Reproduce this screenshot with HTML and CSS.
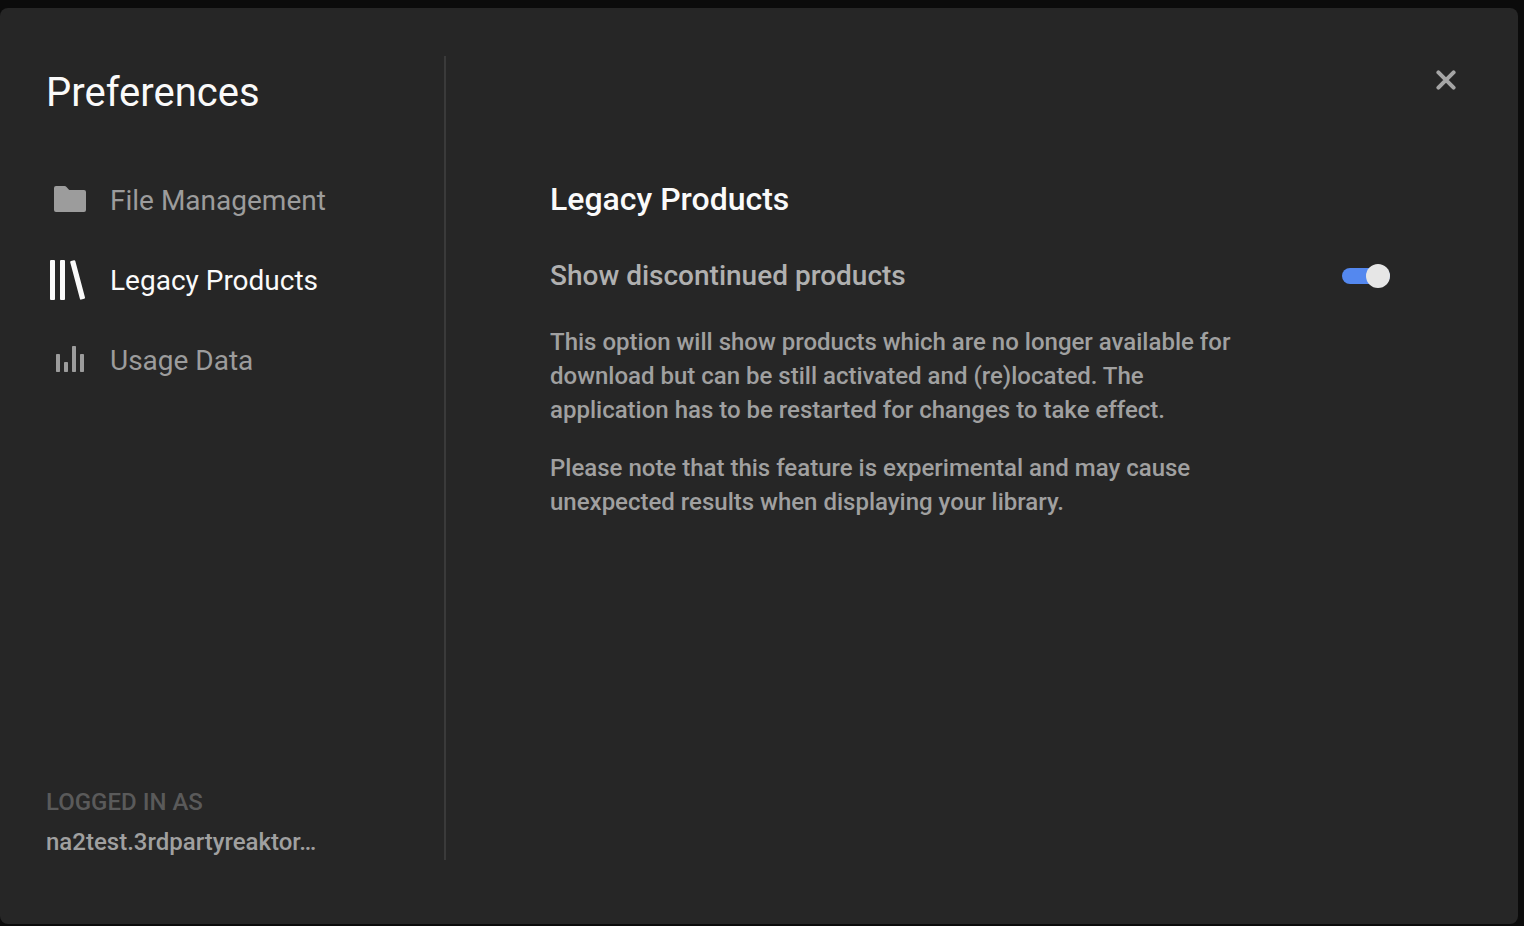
FILE: index.html
```html
<!DOCTYPE html>
<html lang="en">
<head>
<meta charset="utf-8">
<title>Preferences</title>
<link rel="stylesheet" href="styles.css">
</head>
<body>
<main class="dialog">
  <aside class="sidebar">
    <h1 class="title">Preferences</h1>
    <nav class="nav">
      <a class="nav-item" href="#files">
        <svg class="icon" viewBox="0 0 40 40" aria-hidden="true"><path fill="currentColor" d="M8 6h8.500q1.200 0 2 .9l2 2.300q.9.900 2 .9H36a2 2 0 0 1 2 2v18a2 2 0 0 1-2 2H8a2 2 0 0 1-2-2V8a2 2 0 0 1 2-2z"/></svg>
        <span>File Management</span>
      </a>
      <a class="nav-item active" href="#legacy" aria-current="page">
        <svg class="icon" viewBox="0 0 40 40" aria-hidden="true"><g fill="currentColor"><rect x="2" width="5" height="40" rx="1"/><rect x="12" width="5" height="40" rx="1"/><path d="M23 1l3-.8q1-.2 1.300.8l9.700 36.500q.2 1-.8 1.300l-3 .8q-1 .2-1.300-.8L22.200 2.200q-.2-1 .8-1.200z"/></g></svg>
        <span>Legacy Products</span>
      </a>
      <a class="nav-item" href="#usage">
        <svg class="icon" viewBox="0 0 40 40" aria-hidden="true"><g fill="currentColor"><rect x="8" y="14" width="4" height="18" rx=".7"/><rect x="16" y="22" width="4" height="10" rx=".7"/><rect x="24" y="6" width="4" height="26" rx=".7"/><rect x="32" y="14" width="4" height="18" rx=".7"/></g></svg>
        <span>Usage Data</span>
      </a>
    </nav>
    <div class="account">
      <div class="account-label">LOGGED IN AS</div>
      <div class="account-name">na2test.3rdpartyreaktor…</div>
    </div>
  </aside>
  <section class="content">
    <button class="close" type="button" aria-label="Close"><svg class="close-icon" viewBox="0 0 20 20" aria-hidden="true"><path fill="none" stroke="currentColor" stroke-width="4" stroke-linecap="round" d="M2.400 2.400l15.200 15.200M17.600 2.400L2.400 17.600"/></svg></button>
    <div class="panel">
      <h2 class="heading">Legacy Products</h2>
      <div class="setting">
        <label for="discontinued">Show discontinued products</label>
        <input class="toggle" id="discontinued" type="checkbox" role="switch" checked>
      </div>
      <div class="description">
        <p>This option will show products which are no longer available for download but can be still activated and (re)located. The application has to be restarted for changes to take effect.</p>
        <p>Please note that this feature is experimental and may cause unexpected results when displaying your library.</p>
      </div>
    </div>
  </section>
</main>
</body>
</html>
```
FILE: styles.css
```css
* { box-sizing: border-box; }
body {
  margin: 0;
  min-height: 100vh;
  padding: 8px 6px 2px 0;
  display: flex;
  background: #0b0b0b;
  color: #a0a0a0;
  font-family: Roboto, "Liberation Sans", sans-serif;
}
h1, h2, p { margin: 0; }
.dialog {
  flex: 1;
  display: flex;
  padding: 48px 56px 64px 46px;
  background: #262626;
  border-radius: 8px;
}
.sidebar {
  width: 400px;
  flex-shrink: 0;
  display: flex;
  flex-direction: column;
  border-right: 2px solid #3a3a3a;
}
.title {
  padding-top: 13px;
  font-size: 40px;
  line-height: 48px;
  font-weight: 400;
  color: #fafafa;
}
.nav {
  display: flex;
  flex-direction: column;
  gap: 40px;
  margin-top: 63px;
}
.nav-item {
  display: flex;
  align-items: center;
  gap: 22px;
  height: 40px;
  margin-left: 2px;
  font-size: 28px;
  line-height: 42px;
  color: #9c9c9c;
  text-decoration: none;
}
.nav-item.active { color: #fafafa; }
.nav-item span { padding-top: 2px; }
.icon { width: 40px; height: 40px; }
.account {
  margin-top: auto;
  margin-bottom: -2px;
  font-size: 24px;
  line-height: 40px;
  font-weight: 500;
}
.account-label { color: #5a5a5a; }
.content {
  flex: 1;
  display: flex;
  flex-direction: column;
}
.close {
  align-self: flex-end;
  display: flex;
  margin-top: 8px;
  padding: 6px;
  border: 0;
  background: none;
  color: #a5a5a5;
}
.close-icon { width: 20px; height: 20px; }
.panel {
  margin: 82px 72px 0 104px;
}
.heading {
  font-size: 32px;
  line-height: 42px;
  font-weight: 500;
  color: #fafafa;
}
.setting {
  display: flex;
  align-items: center;
  justify-content: space-between;
  margin-top: 36px;
  font-size: 28px;
  line-height: 40px;
  font-weight: 500;
  color: #b0b0b0;
}
.toggle {
  appearance: none;
  display: grid;
  align-items: center;
  width: 48px;
  height: 24px;
  margin: 0;
}
.toggle::before,
.toggle::after {
  content: "";
  grid-area: 1 / 1;
}
.toggle::before {
  height: 16px;
  border-radius: 8px;
  background: #6a6a6a;
}
.toggle::after {
  width: 24px;
  height: 24px;
  border-radius: 50%;
  background: #e6e6e6;
}
.toggle:checked::before { background: #5488ef; }
.toggle:checked::after { justify-self: end; }
.description {
  display: flex;
  flex-direction: column;
  gap: 24px;
  max-width: 704px;
  margin-top: 29px;
  font-size: 24px;
  line-height: 34px;
  font-weight: 500;
}
```
